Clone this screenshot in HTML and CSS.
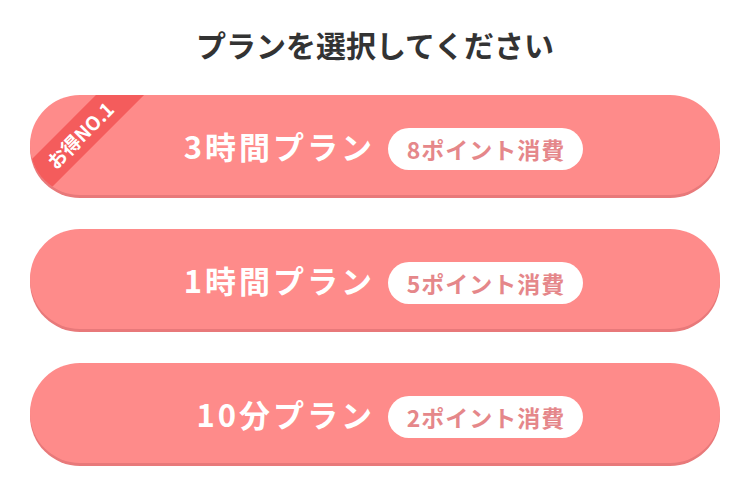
FILE: index.html
```html
<!DOCTYPE html>
<html lang="ja">
<head>
<meta charset="utf-8">
<title>プランを選択してください</title>
<link rel="stylesheet" href="styles.css">
</head>
<body>
<main class="page">
  <h1 class="title">プランを選択してください</h1>
  <ul class="plans">
    <li class="plan">
      <span class="ribbon">お得NO.1</span>
      <span class="plan-name">3時間プラン</span>
      <span class="cost"><span class="cost-text">8ポイント消費</span></span>
    </li>
    <li class="plan">
      <span class="plan-name">1時間プラン</span>
      <span class="cost"><span class="cost-text">5ポイント消費</span></span>
    </li>
    <li class="plan">
      <span class="plan-name">10分プラン</span>
      <span class="cost"><span class="cost-text">2ポイント消費</span></span>
    </li>
  </ul>
</main>
</body>
</html>
```

FILE: styles.css
```css
html, body {
  margin: 0;
  padding: 0;
  background: #ffffff;
}

body {
  font-family: "Noto Sans CJK JP", "Noto Sans", sans-serif;
  width: 750px;
  height: 489px;
  overflow: hidden;
}

.page {
  display: flex;
  flex-direction: column;
  align-items: center;
}

.title {
  margin: 26px 0 0;
  font-size: 30px;
  line-height: 36px;
  font-weight: 700;
  color: #333333;
  letter-spacing: 0;
}

.plans {
  list-style: none;
  margin: 33px 0 0;
  padding: 0;
  display: flex;
  flex-direction: column;
  gap: 34px;
  width: 690px;
}

.plan {
  position: relative;
  overflow: hidden;
  height: 100px;
  border-radius: 50px;
  background: #fe8b8a;
  box-shadow: 0 3px 0 #e8797a;
  display: grid;
  grid-template-columns: 1fr 1fr;
  column-gap: 16px;
  align-items: center;
  padding-left: 10px;
  box-sizing: border-box;
}

.plan-name {
  justify-self: end;
  color: #ffffff;
  font-size: 31px;
  font-weight: 700;
  letter-spacing: 3px;
  margin-right: -3px;
  line-height: 1;
}

.cost {
  justify-self: start;
  width: 195px;
  height: 42px;
  margin-top: 8px;
  border-radius: 21px;
  background: #ffffff;
  display: flex;
  align-items: center;
  justify-content: center;
}

.cost-text {
  color: #e5878a;
  font-size: 23px;
  font-weight: 700;
  letter-spacing: 1px;
  margin-right: -1px;
  line-height: 1;
}

.ribbon {
  position: absolute;
  left: -60px;
  top: 23px;
  width: 220px;
  height: 34px;
  transform: rotate(-45deg);
  background: #f45c5c;
  color: #ffffff;
  font-size: 19px;
  font-weight: 700;
  line-height: 34px;
  text-align: center;
}
```
